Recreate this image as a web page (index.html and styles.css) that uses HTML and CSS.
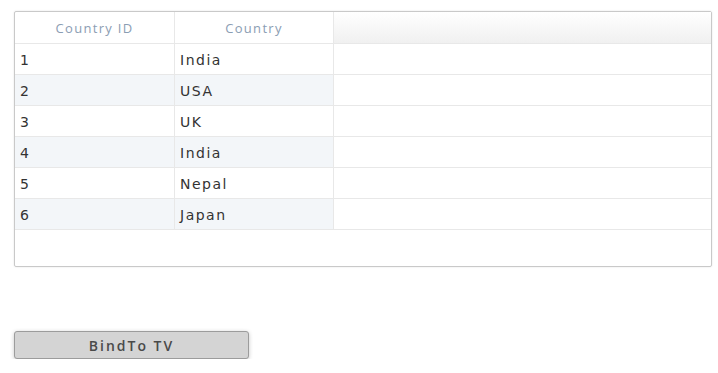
FILE: index.html
```html
<!DOCTYPE html>
<html>
<head>
<meta charset="utf-8">
<link rel="stylesheet" href="styles.css">
</head>
<body>
<div class="page">
  <div class="grid">
    <div class="row head">
      <div class="cell">Country ID</div>
      <div class="cell">Country</div>
      <div class="cell filler"></div>
    </div>
    <div class="row">
      <div class="cell">1</div><div class="cell">India</div><div class="cell filler"></div>
    </div>
    <div class="row alt">
      <div class="cell">2</div><div class="cell">USA</div><div class="cell filler"></div>
    </div>
    <div class="row">
      <div class="cell">3</div><div class="cell">UK</div><div class="cell filler"></div>
    </div>
    <div class="row alt">
      <div class="cell">4</div><div class="cell">India</div><div class="cell filler"></div>
    </div>
    <div class="row">
      <div class="cell">5</div><div class="cell">Nepal</div><div class="cell filler"></div>
    </div>
    <div class="row alt">
      <div class="cell">6</div><div class="cell">Japan</div><div class="cell filler"></div>
    </div>
    <div class="empty"></div>
  </div>
  <button class="btn">BindTo TV</button>
</div>
</body>
</html>
```
FILE: styles.css
```css
html, body {
  margin: 0;
  padding: 0;
  background: #ffffff;
}
.page {
  padding: 11px 0 0 14px;
  display: flex;
  flex-direction: column;
  align-items: flex-start;
}
.grid {
  width: 698px;
  box-sizing: border-box;
  border: 1px solid #c9c9c9;
  border-radius: 2px;
  box-shadow: 0 0 2px rgba(0,0,0,0.12);
  display: flex;
  flex-direction: column;
}
.row {
  display: grid;
  grid-template-columns: 160px 159px 1fr;
  height: 30px;
  border-bottom: 1px solid #e8e8e8;
}
.row.head {
  height: 31px;
}
.cell {
  box-sizing: border-box;
  border-right: 1px solid #e8e8e8;
  padding-left: 5px;
  display: flex;
  align-items: center;
  padding-top: 2px;
  font-family: "DejaVu Sans", Verdana, sans-serif;
  font-size: 14px;
  letter-spacing: 1.5px;
  color: #333;
}
.cell.filler {
  border-right: none;
  background: #fff;
}
.row.alt .cell {
  background: #f3f6f9;
}
.row.alt .cell.filler {
  background: #fff;
}
.head .cell {
  justify-content: center;
  padding: 0;
  font-family: "Open Sans", sans-serif;
  font-size: 13px;
  letter-spacing: 1.3px;
  color: #8b9db3;
}
.head .cell.filler {
  background: linear-gradient(#ffffff, #f0f0f0);
}
.empty {
  height: 36px;
}
.btn {
  margin-top: 64px;
  width: 235px;
  height: 28px;
  box-sizing: border-box;
  border: 1px solid #9c9c9c;
  border-radius: 3px;
  background: #d4d4d4;
  box-shadow: 0 1px 4px rgba(0,0,0,0.22);
  font-family: "Open Sans", sans-serif;
  font-size: 14px;
  font-weight: 600;
  letter-spacing: 2px;
  color: #4a4a4a;
  padding: 0;
}
```
